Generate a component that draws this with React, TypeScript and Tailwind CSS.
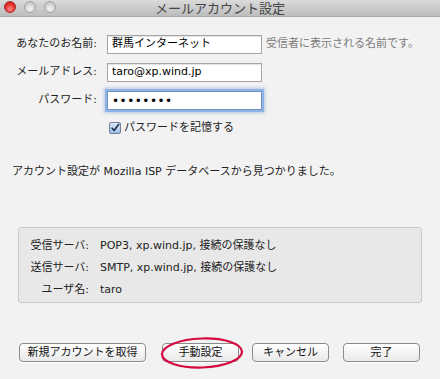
const font = { fontFamily: '"DejaVu Sans", "Noto Sans CJK JP", sans-serif' };

function Light({ red }: { red?: boolean }) {
  return (
    <span
      className={
        red
          ? "h-[12px] w-[12px] rounded-full border border-[#a8282a] bg-[radial-gradient(circle_at_50%_70%,#ff8d8a_0%,#e8302c_55%,#b51d1d_100%)]"
          : "h-[12px] w-[12px] rounded-full border border-[#a3a3a3] bg-[radial-gradient(circle_at_50%_70%,#f4f4f4_0%,#d3d3d3_55%,#b6b6b6_100%)]"
      }
    />
  );
}

function Field({ label, children }: { label: string; children: React.ReactNode }) {
  return (
    <div className="flex items-center">
      <div className="w-[97px] shrink-0 text-right text-[#222]">{label}</div>
      <div className="ml-[10px] flex items-center">{children}</div>
    </div>
  );
}

function Button({ label, w }: { label: string; w: string }) {
  return (
    <button
      className={`${w} h-[19px] rounded-[4px] border border-[#8c8c8c] bg-gradient-to-b from-[#ffffff] to-[#e9e9e9] text-[11px] leading-none text-[#111] shadow-[0_1px_0_rgba(255,255,255,0.8)]`}
    >
      {label}
    </button>
  );
}

const server = [
  ["受信サーバ:", "POP3, xp.wind.jp, 接続の保護なし"],
  ["送信サーバ:", "SMTP, xp.wind.jp, 接続の保護なし"],
  ["ユーザ名:", "taro"],
];

export default function App() {
  return (
    <div className="relative h-[379px] w-[440px] overflow-hidden bg-[#f2f2f2] text-[11px]" style={font}>
      <div className="relative flex h-[17px] items-center border-b border-[#a9a9a9] bg-gradient-to-b from-[#dadada] to-[#bdbdbd]">
        <div className="absolute left-[4px] top-[1px] flex gap-[8px]">
          <Light red />
          <Light />
          <Light />
        </div>
        <div className="w-full pt-[1px] text-center text-[13px] leading-none text-[#444]">メールアカウント設定</div>
      </div>

      <div className="flex flex-col gap-[9px] pt-[18px]">
        <Field label="あなたのお名前:">
          <div className="flex h-[19px] w-[155px] items-center border border-[#a5a5a5] bg-white px-[4px] shadow-[inset_0_1px_1px_rgba(0,0,0,0.12)]">
            群馬インターネット
          </div>
          <span className="ml-[4px] text-[#7b7b7b]">受信者に表示される名前です。</span>
        </Field>
        <Field label="メールアドレス:">
          <div className="flex h-[19px] w-[155px] items-center border border-[#a5a5a5] bg-white px-[4px] shadow-[inset_0_1px_1px_rgba(0,0,0,0.12)]">
            taro@xp.wind.jp
          </div>
        </Field>
        <Field label="パスワード:">
          <div className="flex h-[19px] w-[155px] items-center border border-[#6d94c6] bg-white px-[4px] text-[12px] tracking-[0.5px] shadow-[0_0_0_2px_#8fb4e2,0_0_3px_3px_rgba(120,160,215,0.5)]">
            ••••••••
          </div>
        </Field>
        <div className="flex items-center pl-[109px] pt-[1px]">
          <span className="flex h-[12px] w-[12px] items-center justify-center rounded-[2px] border border-[#6f7f99] bg-gradient-to-b from-[#dde9f8] to-[#9fbde6]">
            <svg viewBox="0 0 12 12" className="h-[12px] w-[12px]">
              <path d="M2.5 6.2 L5 9 L10.5 1.5" fill="none" stroke="#1d2a3f" strokeWidth="1.8" strokeLinecap="round" strokeLinejoin="round" />
            </svg>
          </span>
          <span className="ml-[3px] text-[#222]">パスワードを記憶する</span>
        </div>
      </div>

      <div className="mt-[27px] pl-[12px] text-[#222]">アカウント設定が Mozilla ISP データベースから見つかりました。</div>

      <div className="mx-[18px] mt-[47px] flex h-[76px] flex-col gap-[8px] rounded-[3px] border border-[#c9c9c9] bg-[#e8e8e8] pt-[11px]">
        {server.map(([k, v]) => (
          <div key={k} className="flex h-[14px] items-center leading-[14px] text-[#222]">
            <div className="w-[70px] text-right">{k}</div>
            <div className="ml-[11px]">{v}</div>
          </div>
        ))}
      </div>

      <div className="relative mt-[40px] flex pl-[19px]">
        <Button label="新規アカウントを取得" w="w-[127px]" />
        <div className="ml-[16px]">
          <Button label="手動設定" w="w-[77px]" />
        </div>
        <div className="ml-[13px]">
          <Button label="キャンセル" w="w-[77px]" />
        </div>
        <div className="ml-[14px]">
          <Button label="完了" w="w-[77px]" />
        </div>
        <svg className="pointer-events-none absolute left-[160px] top-[-6px]" width="84" height="32" viewBox="0 0 84 32">
          <ellipse cx="42" cy="16" rx="40" ry="14.5" fill="none" stroke="#d6093f" strokeWidth="2.2" transform="rotate(-2 42 16)" />
        </svg>
      </div>
    </div>
  );
}
